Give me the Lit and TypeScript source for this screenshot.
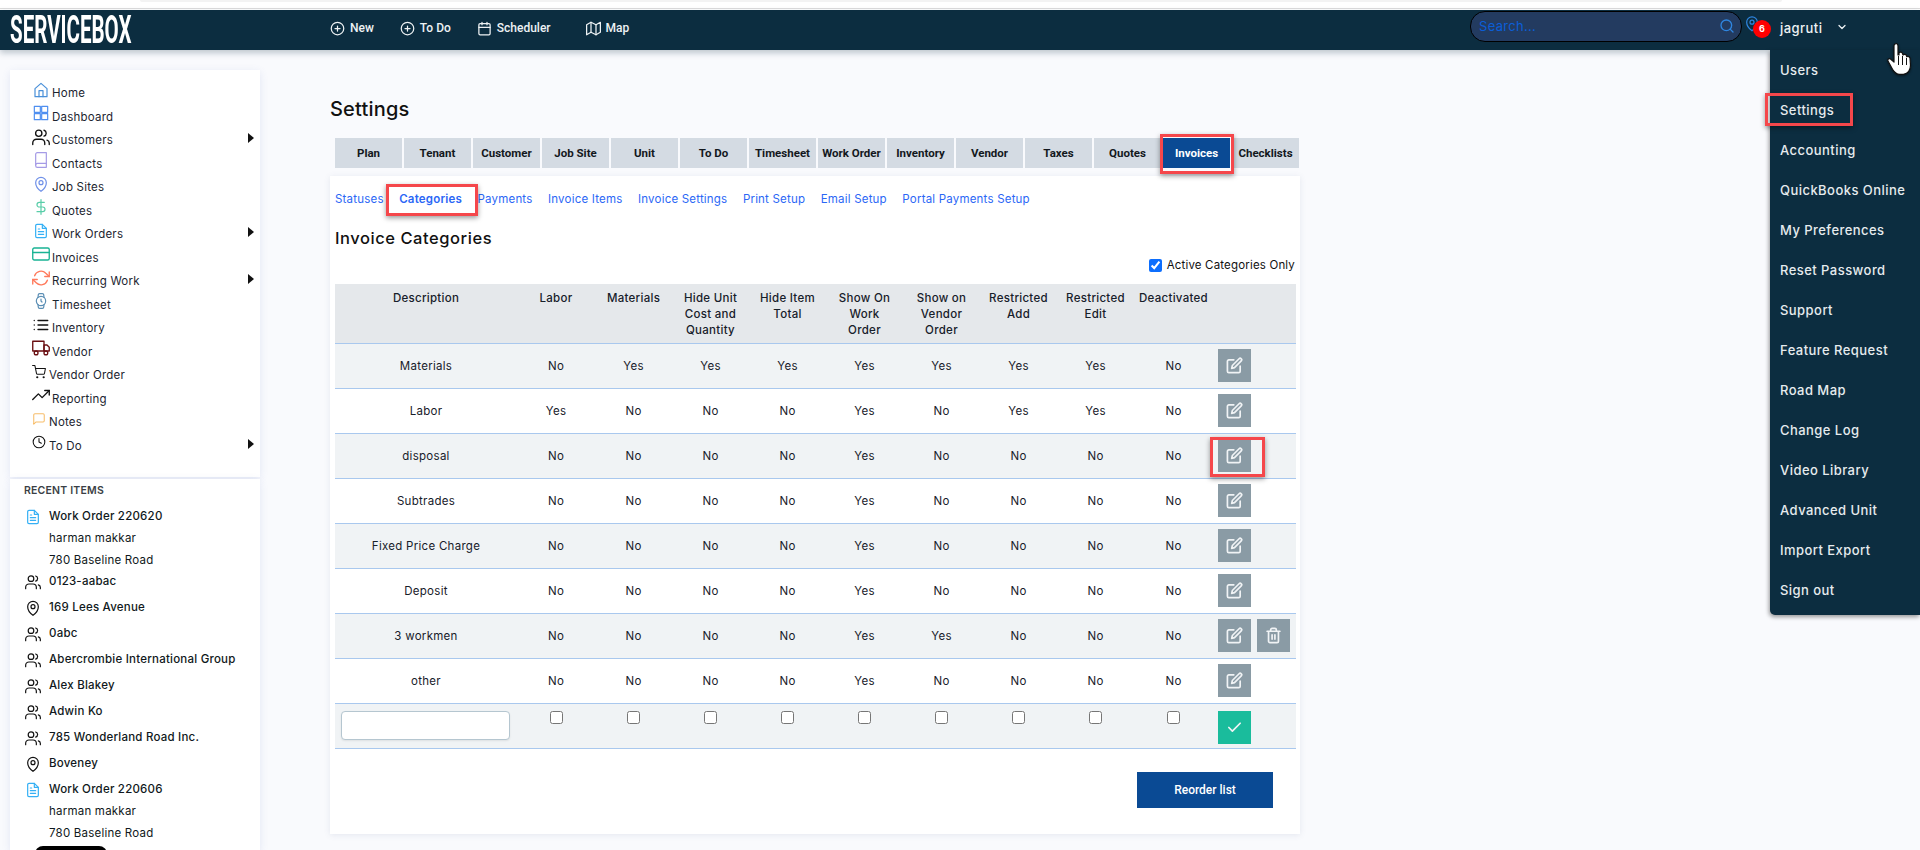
import { LitElement, html, css, svg } from "lit";
import { customElement } from "lit/decorators.js";

const ic = (body: unknown, cls = "", vb = "0 0 24 24") => html`<svg class="ic ${cls}" viewBox=${vb} fill="none" stroke="currentColor" stroke-width="1.8" stroke-linecap="round" stroke-linejoin="round">${body}</svg>`;

const I: Record<string, unknown> = {
  home: svg`<path d="M3 10 12 2l9 8v12H3z"/><path d="M9 22v-9h6v9"/>`,
  grid: svg`<rect x="2" y="2" width="9" height="9"/><rect x="13" y="2" width="9" height="9"/><rect x="2" y="13" width="9" height="9"/><rect x="13" y="13" width="9" height="9"/>`,
  users: svg`<path d="M17 22v-2a5 5 0 0 0-5-5H6a5 5 0 0 0-5 5v2"/><circle cx="9" cy="7" r="4.2"/><path d="M23 22v-2a4 4 0 0 0-3-3.8"/><path d="M16 3a4 4 0 0 1 0 7.7"/>`,
  book: svg`<path d="M4 19.5A2.5 2.5 0 0 1 6.5 17H20"/><path d="M6.5 1H20v22H6.5A2.5 2.5 0 0 1 4 20.5v-17A2.5 2.5 0 0 1 6.5 1z"/>`,
  pin: svg`<path d="M20 10c0 7-8 13-8 13s-8-6-8-13a8 8 0 0 1 16 0z"/><circle cx="12" cy="10" r="3"/>`,
  dollar: svg`<path d="M12 1v22"/><path d="M17 5H9.5a3.5 3.5 0 0 0 0 7h5a3.5 3.5 0 0 1 0 7H6"/>`,
  file: svg`<path d="M14 2H6a2 2 0 0 0-2 2v16a2 2 0 0 0 2 2h12a2 2 0 0 0 2-2V8z"/><path d="M14 2v6h6M8 13h8M8 17h8M8 9h2"/>`,
  card: svg`<rect x="1" y="4" width="22" height="16" rx="2"/><path d="M1 10h22"/>`,
  sync: svg`<path d="M23 4v6h-6M1 20v-6h6"/><path d="M3.5 9a9 9 0 0 1 14.9-3.4L23 10M1 14l4.6 4.4A9 9 0 0 0 20.5 15"/>`,
  watch: svg`<circle cx="12" cy="12" r="7"/><path d="M12 9v3l1.5 1.5M16.5 17.3l-.4 3.8a2 2 0 0 1-2 1.9H9.900a2 2 0 0 1-2-1.900l-.4-3.800M7.500 6.700l.4-3.800a2 2 0 0 1 2-1.900h4.200a2 2 0 0 1 2 1.900l.4 3.800"/>`,
  list: svg`<path d="M8 6h13M8 12h13M8 18h13M3 6h.01M3 12h.01M3 18h.01"/>`,
  truck: svg`<rect x="1" y="3" width="15" height="13"/><path d="M16 8h4l3 3v5h-7z"/><circle cx="5.500" cy="18.500" r="2.500"/><circle cx="18.500" cy="18.500" r="2.500"/>`,
  cart: svg`<circle cx="9" cy="21" r="1"/><circle cx="20" cy="21" r="1"/><path d="M1 1h4l2.700 13.400a2 2 0 0 0 2 1.600h9.700a2 2 0 0 0 2-1.600L23 6H6"/>`,
  trend: svg`<path d="M23 6l-9.500 9.500-5-5L1 18"/><path d="M17 6h6v6"/>`,
  note: svg`<path d="M21 15a2 2 0 0 1-2 2H7l-4 4V5a2 2 0 0 1 2-2h14a2 2 0 0 1 2 2z"/>`,
  clock: svg`<circle cx="12" cy="12" r="10"/><path d="M12 6v6l4 2"/>`,
  plus: svg`<circle cx="12" cy="12" r="10"/><path d="M12 8v8M8 12h8"/>`,
  cal: svg`<rect x="3" y="4" width="18" height="18" rx="2"/><path d="M16 2v4M8 2v4M3 10h18"/>`,
  map: svg`<path d="M1 6v16l7-4 8 4 7-4V2l-7 4-8-4z"/><path d="M8 2v16M16 6v16"/>`,
  search: svg`<circle cx="11" cy="11" r="8"/><path d="M21 21l-4.300-4.300"/>`,
  chev: svg`<path d="M6 9l6 6 6-6"/>`,
  edit: svg`<path d="M11 4H4a2 2 0 0 0-2 2v14a2 2 0 0 0 2 2h14a2 2 0 0 0 2-2v-7"/><path d="M18.500 2.500a2.120 2.120 0 0 1 3 3L12 15l-4 1 1-4z"/>`,
  trash: svg`<path d="M3 6h18M19 6v14a2 2 0 0 1-2 2H7a2 2 0 0 1-2-2V6M8 6V4a2 2 0 0 1 2-2h4a2 2 0 0 1 2 2v2M10 11v6M14 11v6"/>`,
  check: svg`<path d="M20 6 9 17l-5-5"/>`,
};

const NAV: [string, string, string, boolean?][] = [
  ["Home", "home", "c-home"], ["Dashboard", "grid", "c-dash"], ["Customers", "users", "c-blk wide", true],
  ["Contacts", "book", "c-book"], ["Job Sites", "pin", "c-pin"], ["Quotes", "dollar", "c-green"],
  ["Work Orders", "file", "c-file", true], ["Invoices", "card", "c-teal wide"], ["Recurring Work", "sync", "c-org wide", true],
  ["Timesheet", "watch", "c-watch"], ["Inventory", "list", "c-blk wide"], ["Vendor", "truck", "c-red wide"],
  ["Vendor Order", "cart", "c-blk narrow"], ["Reporting", "trend", "c-blk wide"], ["Notes", "note", "c-note narrow"],
  ["To Do", "clock", "c-blk narrow", true],
];

const RECENT: [string, string, string?, string?][] = [
  ["file", "Work Order 220620", "harman makkar", "780 Baseline Road"],
  ["users", "0123-aabac"], ["pin", "169 Lees Avenue"], ["users", "0abc"],
  ["users", "Abercrombie International Group"], ["users", "Alex Blakey"], ["users", "Adwin Ko"],
  ["users", "785 Wonderland Road Inc."], ["pin", "Boveney"],
  ["file", "Work Order 220606", "harman makkar", "780 Baseline Road"],
];

const TABS = ["Plan", "Tenant", "Customer", "Job Site", "Unit", "To Do", "Timesheet", "Work Order", "Inventory", "Vendor", "Taxes", "Quotes", "Invoices", "Checklists"];
const SUB = ["Statuses", "Categories", "Payments", "Invoice Items", "Invoice Settings", "Print Setup", "Email Setup", "Portal Payments Setup"];
const HEAD = ["Description", "Labor", "Materials", "Hide Unit Cost and Quantity", "Hide Item Total", "Show On Work Order", "Show on Vendor Order", "Restricted Add", "Restricted Edit", "Deactivated"];
const ROWS: [string, string][] = [
  ["Materials", "NYYYYYYYN"], ["Labor", "YNNNYNYYN"], ["disposal", "NNNNYNNNN"], ["Subtrades", "NNNNYNNNN"],
  ["Fixed Price Charge", "NNNNYNNNN"], ["Deposit", "NNNNYNNNN"], ["3 workmen", "NNNNYYNNN"], ["other", "NNNNYNNNN"],
];
const MENU = ["Users", "Settings", "Accounting", "QuickBooks Online", "My Preferences", "Reset Password", "Support", "Feature Request", "Road Map", "Change Log", "Video Library", "Advanced Unit", "Import Export", "Sign out"];

@customElement("app-root")
export class AppRoot extends LitElement {
  static styles = css`
    :host { display: block; position: relative; height: 850px; overflow: hidden; background: #f9fafd; font-family: Inter, "Open Sans", sans-serif; color: #1c2530; }
    * { box-sizing: border-box; }
    .ic { display: block; flex: none; width: 16px; height: 16px; }
    .strip { height: 10px; background: #fff; position: relative; }
    .strip::before { content: ""; position: absolute; left: 140px; right: 138px; top: 0; height: 2px; background: #f3f3f3; border-radius: 0 0 6px 6px; }
    .strip::after { content: ""; position: absolute; left: 0; right: 0; top: 8px; height: 1px; background: #dcdcdc; }
    header { height: 40px; background: #0c2d40; display: flex; align-items: center; color: #eef2f4; box-shadow: 0 3px 6px rgba(12, 45, 64, .25); position: relative; z-index: 2; }
    .logo { width: 120px; margin-left: 10px; height: 40px; }
    .logo span { display: inline-block; font: 700 38px/40px Roboto, sans-serif; color: #fff; transform: scaleX(.54); transform-origin: left center; white-space: nowrap; }
    .navlinks { display: flex; margin-left: 200px; gap: 26px; font: 500 12px/16px Roboto, sans-serif; margin-top: -4px; }
    .navlinks div { display: flex; align-items: center; gap: 5px; }
    .navlinks .ic { width: 15px; height: 15px; stroke-width: 2; }
    .navlinks div:nth-child(3) { margin-right: 9px; }
    .search { margin-left: auto; width: 272px; height: 31px; margin-top: -8px; background: #233b60; border: 1px solid #000; border-radius: 15px; display: flex; align-items: center; justify-content: space-between; padding: 0 6px 0 8px; color: #0b5ed7; font-size: 13px; letter-spacing: .3px; }
    .search .ic { color: #2f86e0; width: 16px; height: 16px; stroke-width: 2; }
    .bell { position: relative; width: 36px; margin-left: 2px; margin-top: -6px; height: 24px; color: #2f86e0; }
    .bell .ic { width: 16px; height: 17px; }
    .badge { position: absolute; left: 9px; top: 5px; width: 18px; height: 18px; background: #f00; border-radius: 50%; color: #fff; font: 700 9px/18px Inter, sans-serif; text-align: center; }
    .who { width: 56px; font-size: 13px; font-weight: 500; letter-spacing: .45px; margin-top: -4px; }
    .who-chev { width: 12px; height: 12px; stroke-width: 2.500; margin-top: -6px; }
    .rspace { width: 72px; }
    .page { display: flex; }
    aside { width: 250px; margin: 20px 0 0 10px; flex: none; }
    .panel { background: #fff; box-shadow: 0 2px 8px rgba(90, 110, 190, .14); }
    .nav { padding: 11px 0 20px 22px; margin-bottom: 2px; }
    .row { height: 23.500px; display: flex; align-items: center; gap: 3px; font-size: 11.500px; letter-spacing: .22px; position: relative; padding-top: 1px; }
    .row .ic { width: 16px; height: 18px; margin: -7px 0 0 1px; stroke-width: 1.800; }
    .row .wide { width: 18px; margin: -7px -1px 0 0; }
    .row .narrow { width: 14px; height: 16px; margin-left: 0; }
    .row .tri { position: absolute; right: 6px; top: 5px; border-left: 6px solid #111; border-top: 5px solid transparent; border-bottom: 5px solid transparent; }
    .c-home { color: #4a90d9; } .c-dash { color: #4f8ff0; } .c-blk { color: #111; } .c-book { color: #a59be6; }
    .c-pin { color: #6f90e8; } .c-green { color: #58cda8; } .c-file { color: #35b0f5; } .c-teal { color: #19b394; }
    .c-org { color: #ff7a5c; } .c-watch { color: #5c8fb5; } .c-red { color: #6a0f12; } .c-note { color: #f7bd6a; }
    .recent { padding: 5px 0 0 14px; height: 372px; position: relative; overflow: hidden; }
    .recent h4 { margin: 0 0 9px; font-size: 10.500px; font-weight: 600; letter-spacing: .2px; line-height: 14px; color: #3b3f45; }
    .rec { display: flex; gap: 7px; font-size: 11.500px; letter-spacing: .22px; min-height: 26px; font-weight: 500; color: #101820; }
    .rec .ic { width: 18px; height: 16px; color: #111; stroke-width: 1.800; margin-top: 2px; }
    .rec .c-file { color: #35b0f5; }
    .rec b { display: block; font-weight: 500; line-height: 18px; }
    .rec small { display: block; font-size: 11.500px; font-weight: 400; line-height: 21.500px; }
    .rec small:first-of-type { margin-top: 3px; }
    .rec.multi { min-height: 65px; }
    .blob { position: absolute; left: 25px; bottom: -10px; width: 72px; height: 15px; background: #000; border-radius: 8px 8px 0 0; }
    main { margin-left: 70px; width: 970px; padding-top: 47px; }
    h1 { margin: 0; font-size: 20px; font-weight: 500; line-height: 24px; color: #111; letter-spacing: .2px; }
    .tabs { display: grid; grid-template-columns: repeat(14, 67px); gap: 2px; margin: 17px 0 8px 5px; }
    .tab { height: 30px; background: #d4dbe3; font: 700 11.500px/30px Roboto, sans-serif; color: #13181d; text-align: center; white-space: nowrap; }
    .tab.on { background: #0a4a94; color: #fff; }
    .card { background: #fff; height: 658px; padding: 15px 5px 0; box-shadow: 0 1px 6px rgba(90, 110, 150, .13); }
    .subs { display: flex; gap: 15.500px; font-size: 11.500px; letter-spacing: .2px; line-height: 16px; color: #2b67f6; }
    .subs .on { font-weight: 600; }
    h2 { margin: 21px 0 0; font-size: 16.500px; font-weight: 500; line-height: 20px; color: #111; letter-spacing: .55px; }
    .active { display: flex; justify-content: flex-end; align-items: center; gap: 5px; margin-top: 9px; height: 16px; font-size: 11.500px; letter-spacing: .17px; color: #111; }
    .active input { margin: 0; width: 13px; height: 13px; accent-color: #0d6efd; }
    table { width: 960px; table-layout: fixed; border-collapse: collapse; margin-top: 11px; font-size: 11.500px; letter-spacing: .28px; color: #17202a; }
    th { height: 59px; background: #e5e8eb; font-weight: 500; vertical-align: top; line-height: 16px; padding: 6px 6px 0; border-bottom: 1px solid #a9c8ee; color: #17202a; }
    th:nth-child(10) { white-space: nowrap; padding: 6px 0 0; }
    td { height: 45px; text-align: center; padding: 0; border-bottom: 1px solid #a9c8ee; }
    tr.odd td { background: #f0f3f5; }
    col.d { width: 182px; } col.n { width: 77px; } col.a { width: 83px; } col.l { width: 78px; } col.z { width: 79px; }
    .acts { display: flex; gap: 6px; padding-left: 5px; }
    .btn { width: 33px; height: 33px; background: #8a9ba5; display: flex; align-items: center; justify-content: center; color: #f0f3f5; }
    .btn .ic { width: 17px; height: 17px; stroke-width: 2.400; }
    .btn.go { background: #1abc9c; }
    td.entry { vertical-align: top; padding-top: 7px; }
    .cell-in { display: block; width: 169px; height: 29px; margin-left: 6px; background: #fff; border: 1px solid #b5c6d0; border-radius: 4px; box-shadow: 0 1px 2px rgba(0,0,0,.08); }
    .cb { width: 13px; height: 13px; display: block; margin: 0 auto; }
    .foot { display: flex; justify-content: flex-end; margin: 23px 22px 0 0; }
    .reorder { width: 136px; height: 36px; background: #0a4a94; color: #fff; font: 500 12px/36px Roboto, sans-serif; text-align: center; }
    .menu { position: absolute; left: 1770px; top: 50px; width: 150px; height: 565px; background: #0c2d40; border-radius: 0 0 0 5px; box-shadow: -1px 2px 4px rgba(0,0,0,.4); padding: 0 0 0 10px; color: #e6ebee; font-size: 13px; font-weight: 500; letter-spacing: .45px; z-index: 3; }
    .menu div { height: 40px; line-height: 40px; white-space: nowrap; }
    .mark { position: absolute; border: 3px solid #f5474b; box-shadow: 0 2px 5px rgba(0,0,0,.4); z-index: 4; }
    .m1 { left: 386px; top: 184px; width: 92px; height: 32px; }
    .m2 { left: 1160px; top: 134px; width: 74px; height: 40px; }
    .m3 { left: 1210px; top: 437px; width: 55px; height: 40px; }
    .m4 { left: 1765px; top: 93px; width: 88px; height: 33px; }
    .hand { position: absolute; left: 1886px; top: 42px; width: 28px; height: 33px; z-index: 5; filter: drop-shadow(0 1px 1px rgba(0,0,0,.5)); }
  `;

  render() {
    return html`
      <div class="strip"></div>
      <header>
        <div class="logo"><span>SERVICEBOX</span></div>
        <div class="navlinks">
          <div>${ic(I.plus)}New</div>
          <div>${ic(I.plus)}To Do</div>
          <div>${ic(I.cal)}Scheduler</div>
          <div>${ic(I.map)}Map</div>
        </div>
        <div class="search"><span>Search...</span>${ic(I.search)}</div>
        <div class="bell">${ic(I.pin)}<span class="badge">6</span></div>
        <div class="who">jagruti</div>
        ${ic(I.chev, "who-chev")}
        <div class="rspace"></div>
      </header>
      <div class="page">
        <aside>
          <div class="panel nav">
            ${NAV.map(([t, i, c, more]) => html`<div class="row">${ic(I[i], c)}<span>${t}</span>${more ? html`<i class="tri"></i>` : ""}</div>`)}
          </div>
          <div class="panel recent">
            <h4>RECENT ITEMS</h4>
            ${RECENT.map(([i, t, a, b]) => html`<div class="rec ${a ? "multi" : ""}">${ic(I[i], i === "file" ? "c-file" : "")}<div><b>${t}</b>${a ? html`<small>${a}</small><small>${b}</small>` : ""}</div></div>`)}
            <div class="blob"></div>
          </div>
        </aside>
        <main>
          <h1>Settings</h1>
          <div class="tabs">${TABS.map((t) => html`<div class="tab ${t === "Invoices" ? "on" : ""}">${t}</div>`)}</div>
          <section class="card">
            <div class="subs">${SUB.map((t) => html`<span class=${t === "Categories" ? "on" : ""}>${t}</span>`)}</div>
            <h2>Invoice Categories</h2>
            <label class="active"><input type="checkbox" checked />Active Categories Only</label>
            <table>
              <colgroup><col class="d" /><col class="l" />${[1, 2, 3, 4, 5, 6, 7].map(() => html`<col class="n" />`)}<col class="z" /><col class="a" /></colgroup>
              <thead><tr>${HEAD.map((h) => html`<th>${h}</th>`)}<th></th></tr></thead>
              <tbody>
                ${ROWS.map(([name, v], idx) => html`<tr class=${idx % 2 === 0 ? "odd" : ""}>
                  <td>${name}</td>
                  ${[...v].map((c) => html`<td>${c === "Y" ? "Yes" : "No"}</td>`)}
                  <td><div class="acts"><span class="btn">${ic(I.edit)}</span>${name === "3 workmen" ? html`<span class="btn">${ic(I.trash)}</span>` : ""}</div></td>
                </tr>`)}
                <tr class="odd">
                  <td class="entry"><input class="cell-in" type="text" /></td>
                  ${[...Array(9)].map(() => html`<td class="entry"><input class="cb" type="checkbox" /></td>`)}
                  <td class="entry"><div class="acts"><span class="btn go">${ic(I.check)}</span></div></td>
                </tr>
              </tbody>
            </table>
            <div class="foot"><div class="reorder">Reorder list</div></div>
          </section>
        </main>
      </div>
      <nav class="menu">${MENU.map((m) => html`<div>${m}</div>`)}</nav>
      <div class="mark m1"></div><div class="mark m2"></div><div class="mark m3"></div><div class="mark m4"></div>
      <svg class="hand" viewBox="0 0 28 33"><path d="M9 2c1.500-1 3 0 3 2v9l1 0v-2c1-1.500 3-1 3.500.5l.5 1.500c1-1 3-.8 3.500.8l.3 1c1-.8 3-.3 3.200 1.500l.5 7c0 4-2 8-7 9h-4c-3 0-5-2-7-5L2 19c-.8-1.500 1-3 2.500-2L8 20V4c0-1 .5-1.700 1-2z" fill="#fff" stroke="#111" stroke-width="1.200" stroke-linejoin="round"/><path d="M12.500 14v9M16.500 14v9M20.500 16v7" stroke="#111" stroke-width="1" fill="none"/></svg>
    `;
  }
}
